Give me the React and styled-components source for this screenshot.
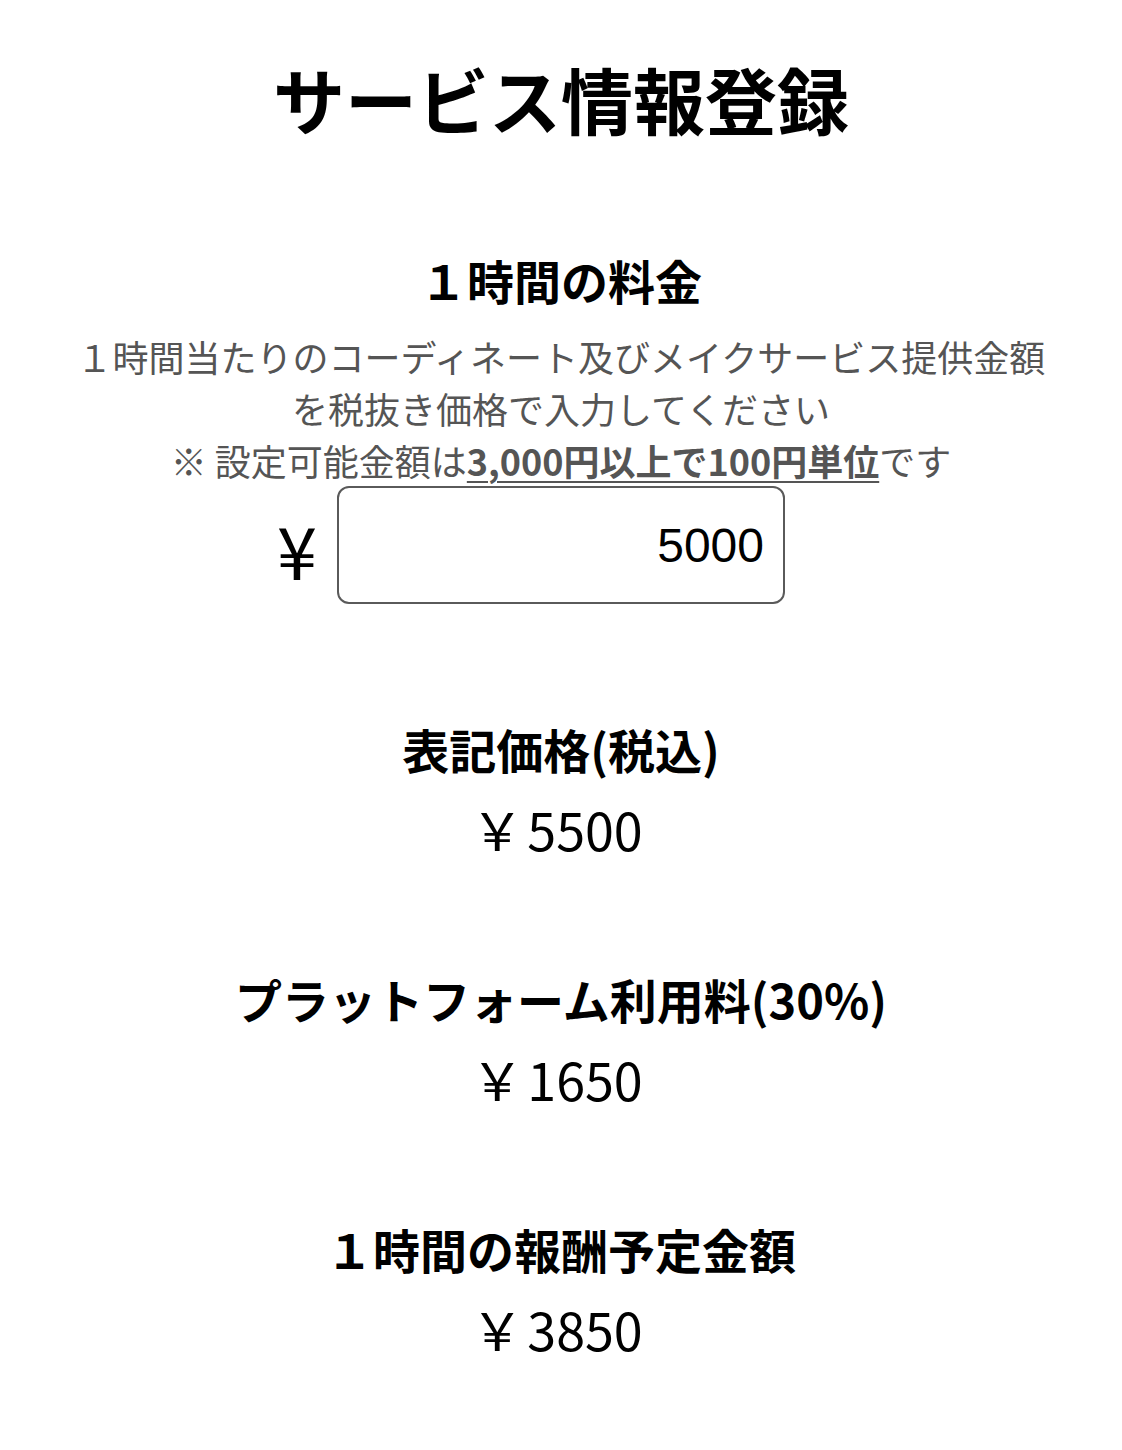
import React, { useState } from "react";
import styled, { createGlobalStyle } from "styled-components";

const GlobalStyle = createGlobalStyle`
  * { box-sizing: border-box; }
  body {
    margin: 0;
    background: #ffffff;
    color: #000000;
    font-family: "Noto Sans CJK JP", "Noto Sans", sans-serif;
  }
`;

const Page = styled.div`
  width: 100%;
  display: flex;
  flex-direction: column;
  align-items: center;
  padding-top: 48px;
  padding-bottom: 60px;
`;

const Title = styled.h1`
  margin: 0;
  font-size: 72px;
  line-height: 100px;
  font-weight: 700;
`;

const Section = styled.section`
  display: flex;
  flex-direction: column;
  align-items: center;
  margin-top: ${(p) => p.$top || 100}px;
`;

const Heading = styled.h2`
  margin: 0;
  font-size: 47px;
  line-height: 66px;
  font-weight: 700;
`;

const Desc = styled.p`
  margin: 17px 0 0;
  font-size: 36px;
  line-height: 52px;
  color: #555555;
  text-align: center;
  width: 1000px;

  strong {
    font-weight: 700;
    text-decoration: underline;
    text-underline-offset: 5px;
    text-decoration-thickness: 2px;
  }
`;

const InputRow = styled.div`
  display: grid;
  grid-template-columns: 1fr 448px 1fr;
  align-items: center;
  width: 100%;
  max-width: 1122px;
`;

const Yen = styled.span`
  justify-self: end;
  margin-right: 20px;
  margin-top: 8px;
  font-family: "Noto Sans CJK JP", sans-serif;
  font-size: 72px;
  line-height: 1;
`;

const PriceInput = styled.input`
  width: 448px;
  height: 118px;
  border: 2px solid #5a5a5a;
  border-radius: 12px;
  padding: 0 19px;
  text-align: right;
  font-family: "Liberation Sans", Arial, sans-serif;
  font-size: 48px;
  color: #000;
  background: #fff;
  outline: none;
`;

const Value = styled.div`
  margin-top: 9px;
  font-size: 52px;
  line-height: 75px;
  font-weight: 400;
`;

const Mark = styled.span`
  margin-right: 4px;
  margin-left: -8px;
`;

export default function App() {
  const [price, setPrice] = useState("5000");
  const base = Number(price) || 0;
  const withTax = Math.round(base * 1.1);
  const fee = Math.round(withTax * 0.3);
  const reward = withTax - fee;

  return (
    <>
      <GlobalStyle />
      <Page>
        <Title>サービス情報登録</Title>

        <Section $top={99}>
          <Heading>１時間の料金</Heading>
          <Desc>
            １時間当たりのコーディネート及びメイクサービス提供金額
            <br />
            を税抜き価格で入力してください
            <br />
            ※ 設定可能金額は<strong>3,000円以上で100円単位</strong>です
          </Desc>
          <InputRow>
            <Yen>¥</Yen>
            <PriceInput
              value={price}
              onChange={(e) => setPrice(e.target.value)}
            />
          </InputRow>
        </Section>

        <Section $top={112}>
          <Heading>表記価格(税込)</Heading>
          <Value><Mark>￥</Mark>{withTax}</Value>
        </Section>

        <Section>
          <Heading>プラットフォーム利用料(30%)</Heading>
          <Value><Mark>￥</Mark>{fee}</Value>
        </Section>

        <Section>
          <Heading>１時間の報酬予定金額</Heading>
          <Value><Mark>￥</Mark>{reward}</Value>
        </Section>
      </Page>
    </>
  );
}
